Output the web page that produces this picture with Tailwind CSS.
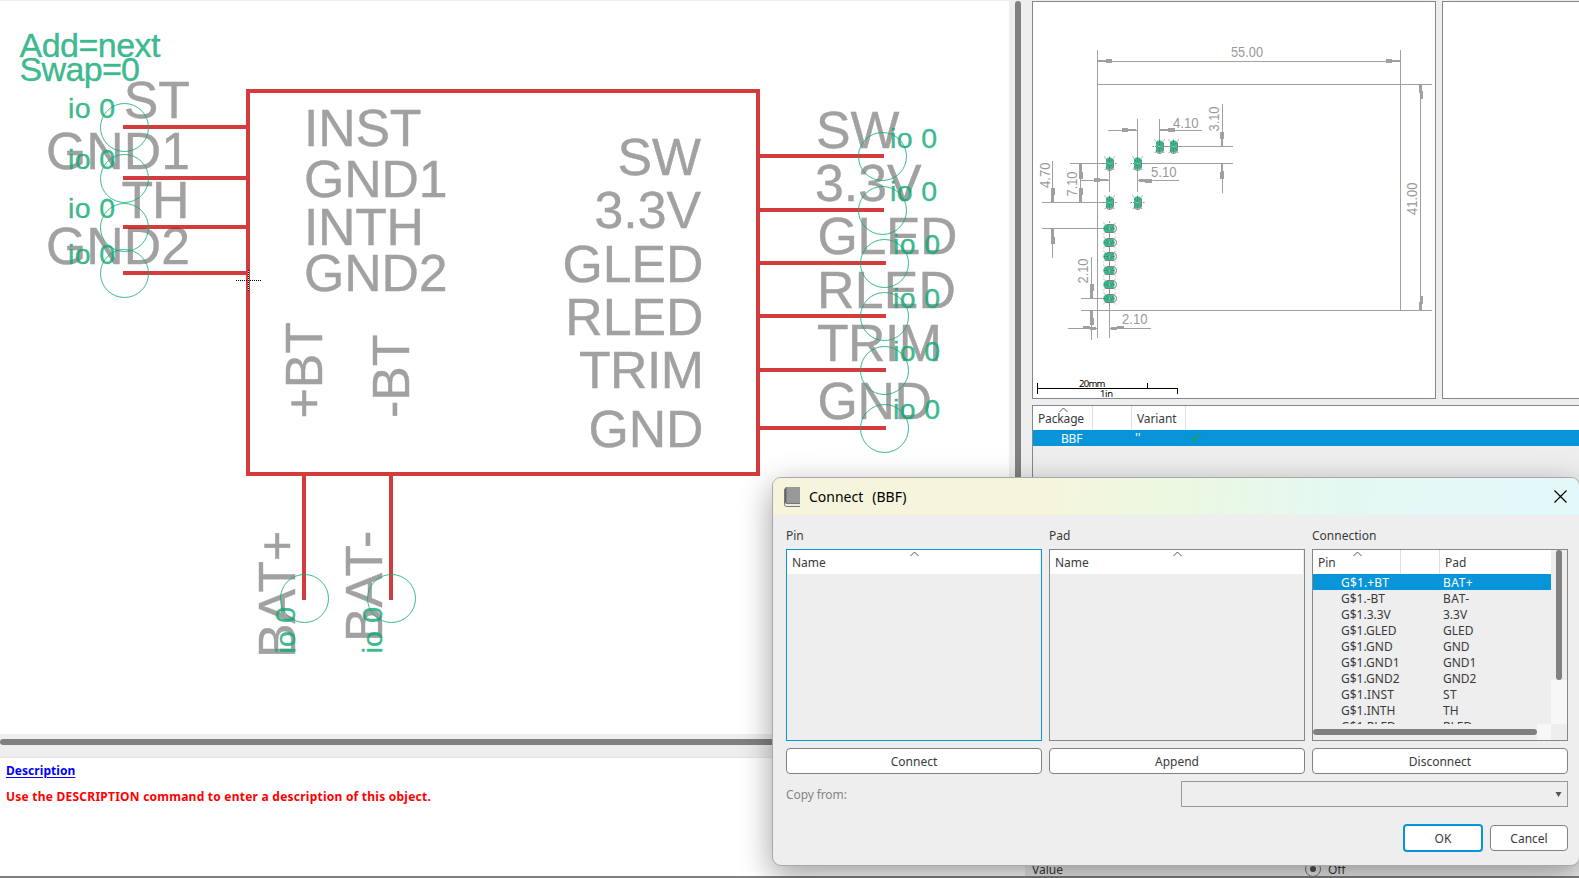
<!DOCTYPE html>
<html lang="en">
<head>
<meta charset="utf-8">
<title>Connect (BBF)</title>
<script src="https://cdn.jsdelivr.net/npm/@tailwindcss/browser@4"></script>
</head>
<body class="relative h-[878px] w-[1579px] overflow-hidden bg-[#eeeeee] font-['Noto_Sans',sans-serif] text-[12px] text-[#3a3a3a]">
<div class="flex h-[878px] w-[1600px]">

  <!-- Symbol editor and description -->
  <div class="flex w-[1025px] flex-col">
    <div class="flex h-[734px]">
      <svg class="mt-px h-[733px] w-[1009px] shrink-0 bg-white font-['Liberation_Sans',sans-serif]" viewBox="0 1 1009 733">
        <g class="fill-[#a1a1a1] stroke-[#a1a1a1] stroke-[0.4px] text-[51.8px]">
          <text x="304" y="146" textLength="117.500">INST</text><text x="304" y="197" textLength="143.500">GND1</text><text x="304" y="245" textLength="120">INTH</text><text x="304" y="291" textLength="143.500">GND2</text>
          <g text-anchor="end">
            <text x="190" y="118">ST</text><text x="190" y="169" textLength="144">GND1</text><text x="189.500" y="218" textLength="68">TH</text><text x="190" y="264" textLength="144">GND2</text>
            <text x="701" y="175">SW</text><text x="701" y="228">3.3V</text><text x="703.500" y="282">GLED</text><text x="703.500" y="335">RLED</text><text x="704" y="388" textLength="125">TRIM</text><text x="703.500" y="447" textLength="115">GND</text>
          </g>
          <text x="816" y="148">SW</text><text x="815" y="201">3.3V</text><text x="817.500" y="254" textLength="140">GLED</text><text x="817" y="308" textLength="139">RLED</text><text x="817" y="361" textLength="125">TRIM</text><text x="817.500" y="419" textLength="114.500">GND</text>
          <text transform="translate(322 418.500) rotate(-90)">+BT</text><text transform="translate(409 418) rotate(-90)">-BT</text>
          <text transform="translate(295 658) rotate(-90)">BAT+</text><text transform="translate(382 642) rotate(-90)">BAT-</text>
        </g>
        <path class="fill-none stroke-[#c90b0b]/80 stroke-4" shape-rendering="crispEdges" d="M248 91H758V474H248ZM123 127H246M123 178H246M123 227H246M123 273H246M760 156H884M760 210H884M760 263H886M760 316H886M760 370H886M760 428H886M304 476V600M391 476V600"/>
        <g class="fill-none stroke-[#0ba973]/80">
          <circle cx="124.500" cy="127.500" r="24"/><circle cx="124.500" cy="178.500" r="24"/><circle cx="124.500" cy="227.500" r="24"/><circle cx="124.500" cy="273.500" r="24"/>
          <circle cx="882.500" cy="156.500" r="24"/><circle cx="882.500" cy="210.500" r="24"/><circle cx="884.500" cy="263.500" r="24"/><circle cx="884.500" cy="316.500" r="24"/><circle cx="884.500" cy="370.500" r="24"/><circle cx="884.500" cy="428.500" r="24"/>
          <circle cx="304.500" cy="598.500" r="24"/><circle cx="391.500" cy="598.500" r="24"/>
        </g>
        <g class="fill-[#0ba973]/80 stroke-[#0ba973]/60 stroke-[0.5px] text-[28.5px]">
          <text class="text-[34px]" x="19.500" y="57" textLength="141">Add=next</text><text class="text-[34px]" x="19.500" y="80.700" textLength="120.500">Swap=0</text>
          <text x="68" y="117.700" textLength="47">io 0</text><text x="68" y="168.700" textLength="47">io 0</text><text x="68" y="217.700" textLength="47">io 0</text><text x="68" y="263.700" textLength="47">io 0</text>
          <text x="890" y="147.700" textLength="47">io 0</text><text x="890" y="200.700" textLength="47">io 0</text><text x="893" y="253.700" textLength="47">io 0</text><text x="893" y="307.700" textLength="47">io 0</text><text x="893" y="360.700" textLength="47">io 0</text><text x="893" y="418.700" textLength="47">io 0</text>
          <text transform="translate(295 653.500) rotate(-90)" textLength="46.500">io 0</text><text transform="translate(382 653.500) rotate(-90)" textLength="46.500">io 0</text>
        </g>
        <g class="fill-none" shape-rendering="crispEdges">
          <path class="stroke-white" d="M248.500 270V291"/>
          <path class="stroke-black" stroke-dasharray="1 1" d="M236 280.500H261M248.500 270V291"/>
        </g>
      </svg>
    </div>
    <div class="h-[5px]"></div>
    <div class="h-[6px] rounded-l-[3px] bg-[#808080]"></div>
    <div class="h-3"></div>
    <div class="h-[119px] border-t border-[#e4e4e4] bg-white pl-1.5 text-[12px] font-bold">
      <div class="pt-1 leading-[18px] text-[#0000ff] underline underline-offset-2"><span class="tracking-[0.05px]">Description</span></div>
      <div class="pt-2 leading-[18px] text-[#ff0000]"><span class="tracking-[0.235px]">Use the DESCRIPTION command to enter a description of this object.</span></div>
    </div>
    <div class="h-0.5 bg-[#808080]"></div>
  </div>

  <!-- Package previews and list -->
  <div class="relative -ml-[10px] flex grow flex-col">
    <div class="flex h-[477px]">
      <div class="mr-[11px] mt-px w-[6px] rounded-t-[3px] bg-[#808080]"></div>
      <div class="flex grow flex-col pt-px">
        <div class="flex h-[398px] gap-[6px]">
          <svg class="h-[398px] w-[404px] shrink-0 bg-white font-['Liberation_Sans',sans-serif]" viewBox="1032 1 404 398">
            <defs>
              <g id="padv">
                <path class="fill-none stroke-[#898989]" d="M-5 -7L5 7M5 -7L-5 7M-7 0H7M0 -7V7" stroke-dasharray="1.500 1"/>
                <rect class="fill-[#3dbb8f]" x="-3.500" y="-6" width="7" height="12" rx="3"/>
                <path class="fill-none stroke-[#20795f]/70" stroke-dasharray="2 1" d="M-3 -4L3 4M3 -4L-3 4M0 -6V6"/>
                <path class="fill-none stroke-[#808080]" d="M4 -4V4Q3 7 0 7Q-3 7 -3.500 4"/>
                <rect class="fill-[#b0b0b0]" x="-1" y="-1" width="2" height="2"/>
              </g>
              <g id="padh">
                <path class="fill-none stroke-[#898989]" d="M-6 -5.500L6 5.500M6 -5.500L-6 5.500M0 -7V7" stroke-dasharray="1.500 1"/>
                <rect class="fill-[#3dbb8f]" x="-6" y="-3.500" width="11" height="7" rx="2.500"/>
                <path class="fill-none stroke-[#20795f]/70" stroke-dasharray="2 1" d="M-4 -3L4 3M4 -3L-4 3M-6 0H5"/>
                <path class="fill-none stroke-[#808080]" d="M-4 4H4Q7 3 7 0Q7 -3 4 -4H-3"/>
                <rect class="fill-[#b0b0b0]" y="-1" x="-1" width="2" height="2"/>
              </g>
            </defs>
            <rect class="fill-none stroke-[#828790]" x="1032.500" y="1.500" width="403" height="397"/>
            <g class="stroke-[#a0a0a0]" shape-rendering="crispEdges">
              <path class="fill-none" d="M1097.500 50V338M1400.500 50V310M1097 61.500H1400M1097 84.500H1432M1081 310.500H1432M1420.500 84V310
                M1108 130.500H1137M1159 130.500H1202M1137.500 119V192M1159.500 119V141M1222.500 104V146M1222.500 163V193M1173 146.500H1233M1159 146.500H1173M1138 163.500H1233M1070 163.500H1109
                M1052.500 161V202M1080.500 163V202M1042 202.500H1109M1080 180.500H1109M1138 180.500H1179M1109.500 163V192
                M1042 228.500H1109M1052.500 228V258M1091.500 257V298M1081 298.500H1109M1091.500 310V340M1068 328.500H1097M1110 328.500H1151M1109.500 228V338"/>
              <g class="fill-[#a0a0a0] stroke-none">
                <path d="M1098 60h8v-1h6v4h-6v-1h-8zM1400 60h-8v-1h-6v4h6v-1h8zM1136 129h-8v-1h-6v4h6v-1h8zM1160 129h8v-1h7v4h-7v-1h-8zM1108 179h-8v-1h-6v4h6v-1h8zM1139 179h6v0h7v4h-7v-1h-6zM1096 327h-6v-1h-7v3h7v1h6zM1111 327h6v-1h7v3h-7v1h-6z"/>
                <path d="M1419 85v8h1v6h3v-8h-1v-6zM1419 310v-8h1v-6h3v8h-1v6zM1221 146v-7h-1v-7h4v7h-1v7zM1221 164v8h-1v7h4v-8h-1v-7zM1051 202v-7h0v-7h4v7h-1v7zM1079 202v-7h0v-7h4v7h-1v7zM1079 164v8h0v7h4v-7h-1v-8zM1051 229v8h0v7h4v-7h-1v-8zM1090 298v-7h0v-7h4v7h-1v7zM1090 311v7h0v7h4v-7h-1v-7z"/>
              </g>
            </g>
            <g class="fill-[#999999] text-[14.5px]">
              <text x="1231" y="57" textLength="32" lengthAdjust="spacingAndGlyphs">55.00</text>
              <text x="1173" y="127.500" textLength="25.500" lengthAdjust="spacingAndGlyphs">4.10</text>
              <text x="1151" y="177" textLength="25.500" lengthAdjust="spacingAndGlyphs">5.10</text>
              <text x="1122" y="324" textLength="25.500" lengthAdjust="spacingAndGlyphs">2.10</text>
              <text transform="translate(1218.500 131.500) rotate(-90)" textLength="25" lengthAdjust="spacingAndGlyphs">3.10</text>
              <text transform="translate(1049.500 188) rotate(-90)" textLength="25.500" lengthAdjust="spacingAndGlyphs">4.70</text>
              <text transform="translate(1077 196.500) rotate(-90)" textLength="25" lengthAdjust="spacingAndGlyphs">7.10</text>
              <text transform="translate(1088 283.500) rotate(-90)" textLength="25" lengthAdjust="spacingAndGlyphs">2.10</text>
              <text transform="translate(1417 215) rotate(-90)" textLength="32.500" lengthAdjust="spacingAndGlyphs">41.00</text>
            </g>
            <use href="#padv" x="1159.500" y="146.500"/><use href="#padv" x="1173.500" y="146.500"/><use href="#padv" x="1109.500" y="163.500"/><use href="#padv" x="1137.500" y="163.500"/><use href="#padv" x="1109.500" y="202.500"/><use href="#padv" x="1137.500" y="202.500"/>
            <use href="#padh" x="1109.500" y="228.500"/><use href="#padh" x="1109.500" y="242.500"/><use href="#padh" x="1109.500" y="256.500"/><use href="#padh" x="1109.500" y="270.500"/><use href="#padh" x="1109.500" y="284.500"/><use href="#padh" x="1109.500" y="298.500"/>
            <path class="fill-none stroke-black" shape-rendering="crispEdges" d="M1037.500 383V394M1037 388.500H1178M1147.500 383V388M1177.500 388V394"/>
            <g class="fill-black font-['Noto_Sans',sans-serif] text-[9.5px]"><text x="1079" y="387" textLength="26.500">20mm</text><text x="1100" y="397" textLength="13">1in</text></g>
          </svg>
          <div class="grow border border-[#828790] bg-white"></div>
        </div>
        <div class="mt-[6px] grow border border-b-0 border-[#828790] bg-[#eeeeee]">
          <div class="relative flex h-6 items-center bg-white leading-[26px]">
            <span class="h-6 w-[60px] border-r border-[#e0e0e0] pl-[5px] tracking-[-0.15px]">Package</span><span class="h-6 w-[39px] border-r border-[#e0e0e0]"></span><span class="h-6 w-[54px] border-r border-[#e0e0e0] pl-[5px] tracking-[-0.1px]">Variant</span>
            <svg class="absolute left-[26px] top-px h-[6px] w-[9px]" viewBox="0 0 9 6"><path class="fill-none stroke-[#555555]" d="M.5 5L4.500 1L8.500 5"/></svg>
          </div>
          <div class="flex h-4 items-center bg-[#0794d9] leading-4 text-white">
            <span class="w-[102px] pl-7 pt-px tracking-[-0.2px]">BBF</span><span class="w-[54px]">''</span>
            <svg class="h-3 w-3" viewBox="0 0 12 12"><path class="fill-none stroke-[#189a86] stroke-[2.6px]" d="M1 5.500L4.500 9L11 2"/></svg>
          </div>
        </div>
      </div>
    </div>
    <div class="ml-[10px] mt-auto flex h-[14px] items-center leading-[17px]">
      <span class="w-[280px] pl-[7px]">Value</span>
      <span class="flex h-4 w-4 items-center justify-center rounded-full border border-[#777777]"><span class="h-[6px] w-[6px] rounded-full bg-[#555555]"></span></span>
      <span class="pl-[7px]">Off</span>
    </div>
    <div class="ml-[10px] h-0.5 bg-[#808080]"></div>
  </div>
</div>

<!-- Connect dialog -->
<div class="absolute left-[772px] top-[477px] flex h-[389px] w-[808px] flex-col overflow-hidden rounded-[9px] border border-[#a8a8a8] bg-[#eeeeee] shadow-[0_10px_32px_rgba(0,0,0,0.38)]">
  <div class="flex h-[37px] shrink-0 items-center bg-[linear-gradient(100deg,#f6f4dc_0%,#f5f5dc_35%,#eaf8e2_52%,#e4f8f2_70%,#e3f8fa_100%)] pl-[11px] pr-[12px]">
    <svg class="h-5 w-4" viewBox="0 0 16 20"><path class="fill-[#666666]" d="M2 0H3V16H1.500L.5 18V2Z"/><path class="fill-[#999999]" d="M2.500 0H16V16H2.500Z"/><path class="fill-[#e8e8e8]" d="M2 16H16V18.500H2Z"/><path class="fill-none stroke-[#777777]" d="M.5 2V17.500Q.5 19.500 2.500 19.500H16M2 16.500H16"/></svg>
    <span class="flex gap-[9px] pl-[9px] text-[14px] text-black"><span>Connect</span><span>(BBF)</span></span>
    <svg class="ml-auto h-[13px] w-[13px]" viewBox="0 0 13 13"><path class="fill-none stroke-black stroke-[1.2px]" d="M.5 .5L12.500 12.500M12.500 .5L.5 12.500"/></svg>
  </div>
  <div class="flex grow flex-col pl-[13px] pt-[11px]">
    <div class="grid grid-cols-[256px_256px_256px] gap-x-[7px]">
      <div class="h-[23px] leading-[20px]">Pin</div><div class="h-[23px] leading-[20px]">Pad</div><div class="h-[23px] leading-[20px]">Connection</div>
      <div class="h-[192px] border border-[#0794d9]">
        <div class="relative mr-px h-6 bg-white pl-[5px] leading-[25px]">Name<svg class="absolute left-[123px] top-px h-[6px] w-[9px]" viewBox="0 0 9 6"><path class="fill-none stroke-[#555555]" d="M.5 5L4.500 1L8.500 5"/></svg></div>
      </div>
      <div class="h-[192px] border border-[#828790]">
        <div class="relative mr-px h-6 bg-white pl-[5px] leading-[25px]">Name<svg class="absolute left-[123px] top-px h-[6px] w-[9px]" viewBox="0 0 9 6"><path class="fill-none stroke-[#555555]" d="M.5 5L4.500 1L8.500 5"/></svg></div>
      </div>
      <div class="flex h-[192px] border border-[#828790]">
        <div class="flex w-[238px] flex-col">
          <div class="relative flex h-6 shrink-0 bg-white leading-[25px]">
            <span class="w-[88px] border-r border-[#e0e0e0] pl-[5px]">Pin</span><span class="w-[39px] border-r border-[#e0e0e0]"></span><span class="pl-[5px]">Pad</span>
            <svg class="absolute left-[40px] top-px h-[6px] w-[9px]" viewBox="0 0 9 6"><path class="fill-none stroke-[#555555]" d="M.5 5L4.500 1L8.500 5"/></svg>
          </div>
          <div class="grid h-[150px] shrink-0 auto-rows-[16px] grid-cols-[130px_108px] overflow-hidden leading-[17px] [&>*:nth-child(odd)]:pl-7">
            <div class="bg-[#0794d9] tracking-[0.15px] text-white">G$1.+BT</div><div class="bg-[#0794d9] tracking-[0.5px] text-white">BAT+</div>
            <div>G$1.-BT</div><div class="tracking-[0.5px]">BAT-</div>
            <div>G$1.3.3V</div><div>3.3V</div>
            <div>G$1.GLED</div><div>GLED</div>
            <div>G$1.GND</div><div>GND</div>
            <div>G$1.GND1</div><div>GND1</div>
            <div>G$1.GND2</div><div>GND2</div>
            <div class="tracking-[0.1px]">G$1.INST</div><div class="tracking-[0.4px]">ST</div>
            <div>G$1.INTH</div><div>TH</div>
            <div>G$1.RLED</div><div>RLED</div>
          </div>
          <div class="flex h-4 items-center">
            <div class="h-[6px] w-[224px] rounded-[3px] bg-[#808080]"></div>
            <div class="h-4 grow bg-[#f7f7f7]"></div>
          </div>
        </div>
        <div class="flex w-4 flex-col items-center">
          <div class="h-[130px] w-[6px] rounded-[3px] bg-[#808080]"></div>
          <div class="h-[44px] w-4 bg-[#f7f7f7]"></div>
        </div>
      </div>
      <button class="mt-[7px] h-[26px] rounded-[4px] border border-[#828282] bg-white pt-0.5">Connect</button>
      <button class="mt-[7px] h-[26px] rounded-[4px] border border-[#828282] bg-white pt-0.5">Append</button>
      <button class="mt-[7px] h-[26px] rounded-[4px] border border-[#828282] bg-white pt-0.5">Disconnect</button>
    </div>
    <div class="mt-[7px] flex items-center">
      <span class="w-[395px] pt-0.5 tracking-[-0.1px] text-[#858585]">Copy from:</span>
      <div class="flex h-[26px] w-[387px] items-center justify-end border border-[#999999] pr-[5px]"><svg class="h-[5px] w-[7px]" viewBox="0 0 7 5"><path class="fill-[#555555]" d="M.5 0H6.500L3.500 5Z"/></svg></div>
    </div>
    <div class="mt-[17px] flex items-center pl-[617px]">
      <button class="h-7 w-20 rounded-[4px] border-2 border-[#0794d9] bg-white pt-0.5">OK</button>
      <button class="ml-[7px] h-[26px] w-[78px] rounded-[4px] border border-[#828282] bg-white pt-0.5">Cancel</button>
    </div>
  </div>
</div>
</body>
</html>
